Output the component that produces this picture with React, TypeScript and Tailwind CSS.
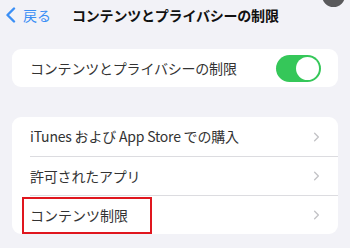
import { ChevronRight } from 'lucide-react';

const FONT = '"Noto Sans CJK JP", "Noto Sans", sans-serif';

const ROWS = ['iTunes および App Store での購入', '許可されたアプリ', 'コンテンツ制限'];

export default function App() {
  return (
    <div className="relative w-[350px] h-[248px] overflow-hidden bg-[#f2f2f7]" style={{ fontFamily: FONT }}>
      {/* corner badge */}
      <div className="absolute right-[5px] top-[-16px] w-[23px] h-[23px] rounded-full bg-[#5a5a5c]" />

      {/* nav bar */}
      <div className="flex items-center h-[30px] pl-[5px]">
        <div className="flex items-center text-[#3b8ff5] w-[67px]">
          <svg width="12" height="16" viewBox="0 0 12 16" fill="none" stroke="currentColor" strokeWidth="2.4" strokeLinecap="round" strokeLinejoin="round">
            <path d="M9 1.5 2.5 8 9 14.5" />
          </svg>
          <span className="text-[14px] leading-none ml-[6px]">戻る</span>
        </div>
        <h1 className="text-[14px] font-bold text-[#111] leading-none tracking-[-0.2px]">コンテンツとプライバシーの制限</h1>
      </div>

      {/* toggle card */}
      <div className="mx-[12px] mt-[19px] h-[38px] rounded-[9px] bg-white flex items-center pl-[18px] pr-[17px]">
        <span className="flex-1 text-[14px] text-[#333] tracking-[-0.2px]">コンテンツとプライバシーの制限</span>
        <div className="w-[45px] h-[27px] rounded-full bg-[#35c759] flex items-center justify-end p-[2px]">
          <div className="w-[23px] h-[23px] rounded-full bg-white" />
        </div>
      </div>

      {/* list card */}
      <div className="mx-[12px] mt-[30px] rounded-[9px] bg-white">
        {ROWS.map((label, i) => (
          <div key={label} className="flex items-stretch h-[39px] pl-[18px]">
            <div className={`flex-1 h-full flex items-center pr-[14px] ${i > 0 ? 'border-t border-[#dcdce0]' : ''}`}>
              {i === 2 ? (
                <span className="ml-[-8px] h-[37px] w-[130px] border-2 border-[#e0161e] flex items-center pl-[6px] text-[14px] text-[#333]">
                  {label}
                </span>
              ) : (
                <span className="text-[14px] text-[#333] tracking-[-0.2px]">{label}</span>
              )}
              <span className="flex-1" />
              <ChevronRight className="w-[15px] h-[18px] text-[#c4c4c7]" strokeWidth={2.2} />
            </div>
          </div>
        ))}
      </div>
    </div>
  );
}
